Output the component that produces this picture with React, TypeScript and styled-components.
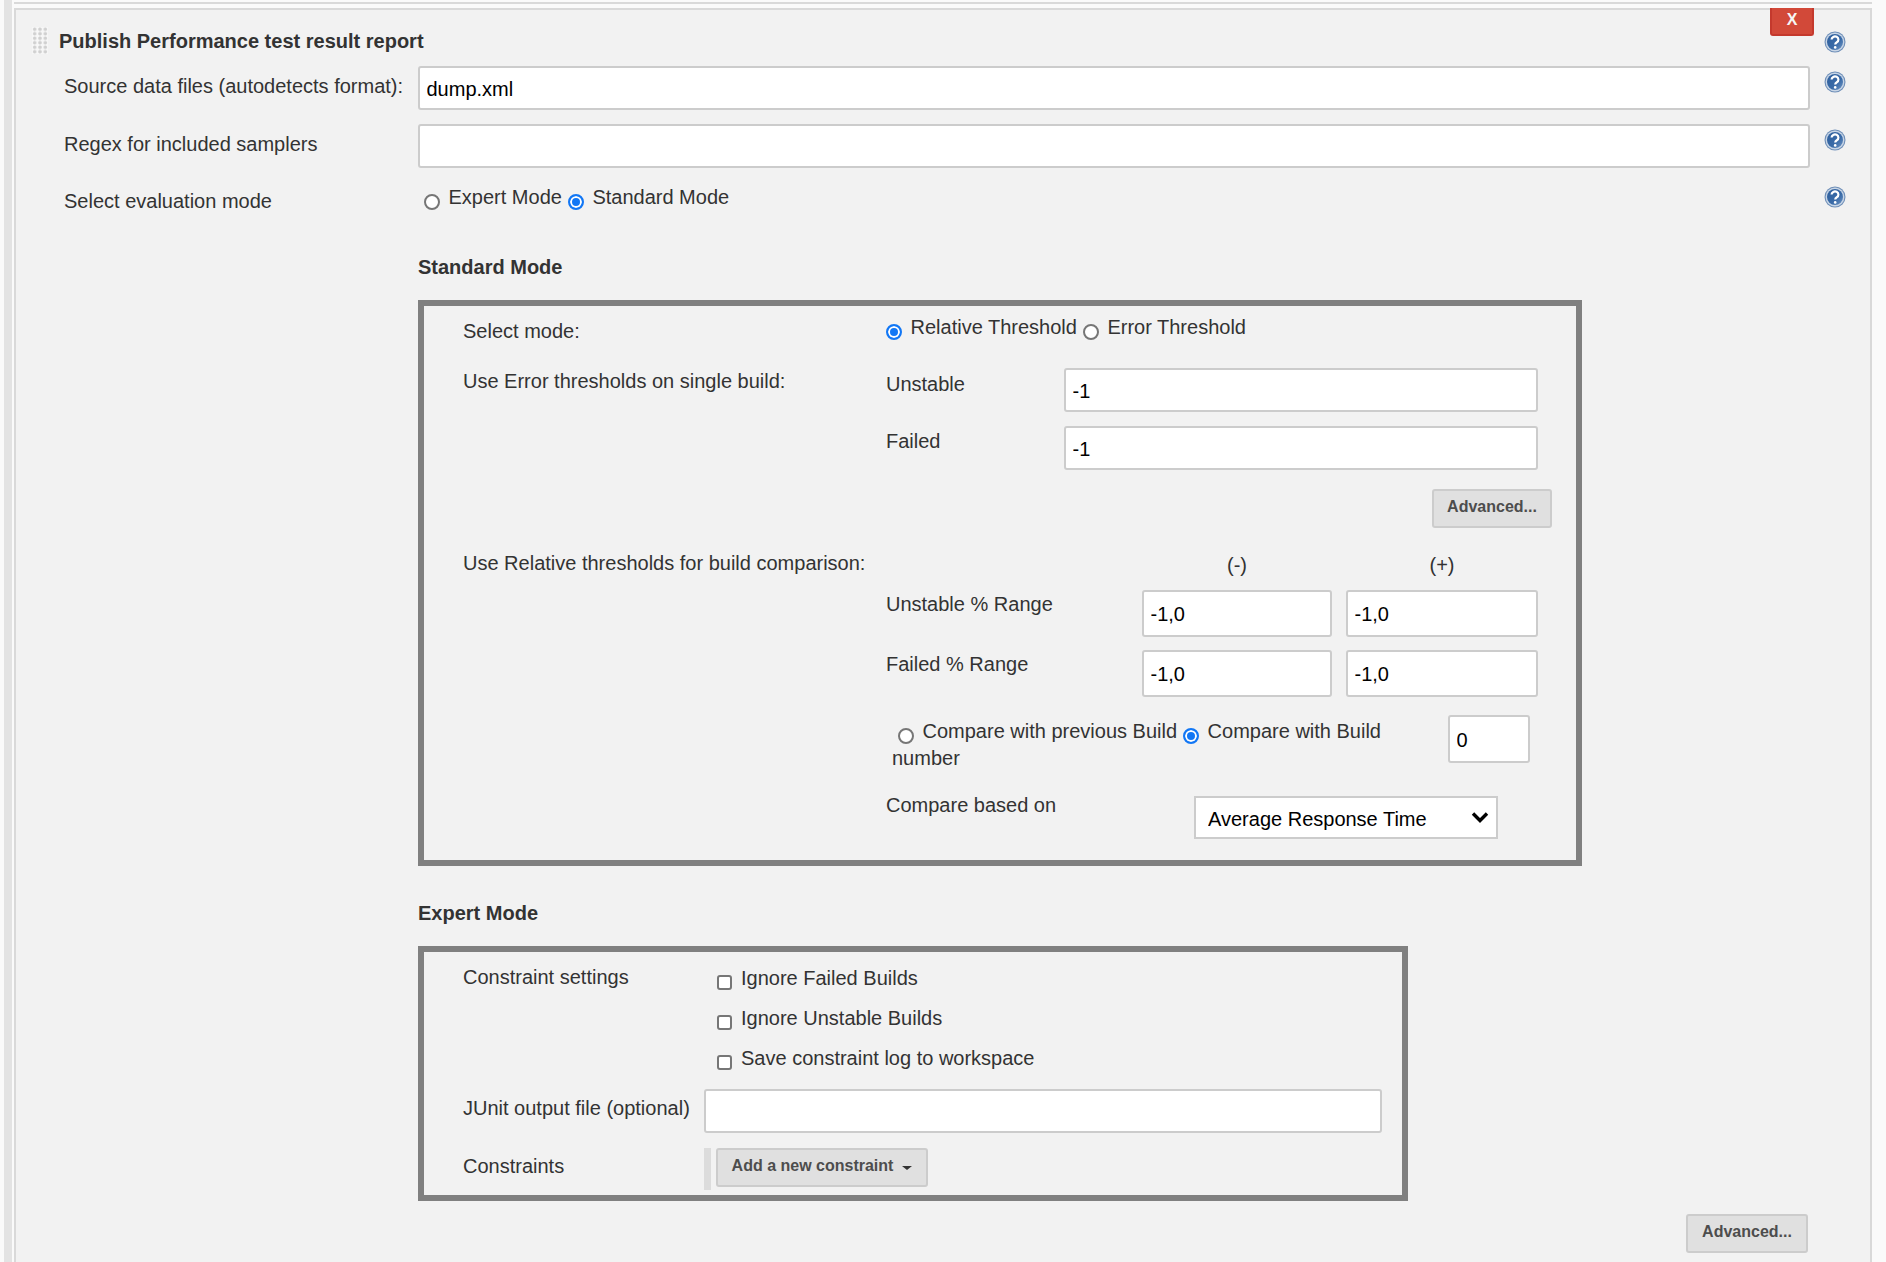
import { createGlobalStyle, styled } from "styled-components";

const GlobalStyle = createGlobalStyle`
    html, body {
        margin: 0;
        height: 100%;
        overflow: hidden;
        background-color: #fafafa;
    }
    body {
        font-family: "Liberation Sans", Arial, sans-serif;
        font-size: 20px;
        line-height: 22px;
        color: #333;
    }
`;

const Page = styled.div`
    display: flex;
    height: 1262px;
    padding-left: 4px;
    box-sizing: border-box;
`;
const Rail = styled.div`
    width: 8px;
    background-color: #e3e3e3;
`;
const Main = styled.div`
    width: 1860px;
    display: flex;
    flex-direction: column;
    padding-top: 2px;
    box-sizing: border-box;
`;
const PrevEdge = styled.div`
    height: 2px;
    margin: 0 0 4px 2px;
    background-color: #d9d9d9;
`;
const Panel = styled.section`
    flex: 1;
    position: relative;
    margin-left: 2px;
    border: 2px solid #d9d9d9;
    border-bottom: 0;
    background-color: #f2f2f2;
`;
const DeleteButton = styled.button`
    position: absolute;
    top: -2px;
    right: 56px;
    width: 44px;
    height: 28px;
    padding: 0 0 2px;
    border: 2px solid #c4392d;
    border-top: 0;
    border-radius: 0 0 3px 3px;
    background-color: #d24939;
    color: #f6f6f6;
    font: bold 16px "Liberation Sans", Arial, sans-serif;
`;
const Header = styled.div`
    display: flex;
    align-items: center;
    height: 27px;
    margin-top: 17px;
    padding-left: 16px;
    gap: 11px;
`;
const Grip = styled.div`
    width: 16px;
    height: 27px;
    background-color: #f8f8f8;
    background-image: radial-gradient(circle, #d0d0d0 38%, #f7f7f7 62%);
    background-size: 5.33px 4.5px;
`;
const Title = styled.h2`
    flex: 1;
    margin: 1px 0 0;
    font-size: 20px;
    font-weight: bold;
    line-height: 22px;
`;
const HelpSlot = styled.div<{ $top?: number }>`
    width: 22px;
    height: 22px;
    margin-left: 14px;
    margin-right: 24px;
    margin-top: ${(p) => p.$top ?? 0}px;
`;
const FormRow = styled.div<{ $top: number }>`
    display: grid;
    grid-template-columns: 402px 1392px 1fr;
    margin-top: ${(p) => p.$top}px;
`;
const RowLabel = styled.label<{ $top?: number }>`
    padding-left: 48px;
    padding-top: ${(p) => p.$top ?? 0}px;
`;
const TextInput = styled.input<{ $height?: number }>`
    display: block;
    width: 100%;
    height: ${(p) => p.$height ?? 44}px;
    box-sizing: border-box;
    padding: 2px 6.5px 0;
    border: 2px solid #ccc;
    border-radius: 3px;
    background-color: #fff;
    color: #000;
    font: 20px "Liberation Sans", Arial, sans-serif;
    outline: none;
`;
const ChoiceLine = styled.div<{ $inset: number; $top: number }>`
    display: flex;
    align-items: center;
    align-self: start;
    margin-top: ${(p) => p.$top}px;
    padding-left: ${(p) => p.$inset}px;
    gap: 6px;
`;
const Choice = styled.label`
    display: flex;
    align-items: center;
    gap: 8.5px;
`;
const Radio = styled.input.attrs({ type: "radio" })`
    appearance: none;
    flex: none;
    width: 16px;
    height: 16px;
    margin: 10px 0 0;
    box-sizing: border-box;
    border: 2px solid #767676;
    border-radius: 50%;
    background-color: #fff;

    &:checked {
        border-color: #1277f5;
        background-color: #1277f5;
        box-shadow: inset 0 0 0 2px #fff;
    }
`;
const InlineRadio = styled(Radio)`
    display: inline-block;
    margin: 0 8.5px 0 6px;
    vertical-align: -6px;
`;
const Heading = styled.h3<{ $top: number }>`
    margin: ${(p) => p.$top}px 0 0 402px;
    font-size: 20px;
    font-weight: bold;
    line-height: 22px;
`;
const ModeBox = styled.div<{ $width: number; $top: number }>`
    width: ${(p) => p.$width}px;
    margin: ${(p) => p.$top}px 0 0 402px;
    border: 6px solid #808080;
    box-sizing: border-box;
    padding-left: 39px;
`;
const Section = styled.div<{ $top: number }>`
    display: grid;
    grid-template-columns: 423px 1fr;
    margin-top: ${(p) => p.$top}px;
`;
const SectionLabel = styled.div<{ $top?: number }>`
    padding-top: ${(p) => p.$top ?? 0}px;
`;
const SectionBody = styled.div`
    display: flex;
    flex-direction: column;
    padding-right: 38px;
`;
const FieldRow = styled.div`
    display: grid;
    grid-template-columns: 178px 1fr;
    margin-bottom: 14px;
`;
const FieldLabel = styled.div<{ $top: number }>`
    padding-top: ${(p) => p.$top}px;
`;
const AdvancedLine = styled.div<{ $inset: number; $top: number }>`
    display: flex;
    justify-content: flex-end;
    margin-top: ${(p) => p.$top}px;
    margin-right: ${(p) => p.$inset}px;
`;
const Button = styled.button<{ $width: number }>`
    display: flex;
    align-items: center;
    justify-content: center;
    gap: 9px;
    width: ${(p) => p.$width}px;
    height: 39px;
    padding: 0 0 3px;
    border: 2px solid #ccc;
    border-radius: 3px;
    background-color: #e0e0e0;
    color: #4d4d4d;
    font: bold 16px "Liberation Sans", Arial, sans-serif;
`;
const Caret = styled.span`
    width: 0;
    height: 0;
    margin-top: 3px;
    border-left: 5px solid transparent;
    border-right: 5px solid transparent;
    border-top: 4px solid #333;
`;
const RangeGrid = styled.div<{ $top: number }>`
    display: grid;
    grid-template-columns: 256px 190px 206px;
    margin-top: ${(p) => p.$top}px;
`;
const RangeCell = styled.div<{ $pad?: boolean }>`
    margin-left: ${(p) => (p.$pad ? 14 : 0)}px;
`;
const RangeHead = styled(RangeCell)`
    text-align: center;
`;
const CompareRow = styled.div`
    display: grid;
    grid-template-columns: 562px 82px;
    align-items: start;
    margin-top: 18px;
`;
const CompareText = styled.div`
    padding-left: 6px;
    padding-top: 3px;
    line-height: 27px;
`;
const BasedRow = styled.div`
    display: grid;
    grid-template-columns: 308px 304px;
    margin-top: 22px;
    margin-bottom: 21px;
`;
const SelectWrap = styled.div`
    position: relative;
    margin-top: 2px;
    height: 43px;
`;
const Select = styled.select`
    appearance: none;
    display: block;
    width: 100%;
    height: 100%;
    padding: 2px 12px 0;
    border: 2px solid #ccc;
    border-radius: 0;
    background-color: #fff;
    color: #000;
    font: 20px "Liberation Sans", Arial, sans-serif;
`;
const SelectArrow = styled.svg`
    position: absolute;
    top: 15px;
    right: 9px;
    width: 18px;
    height: 12px;
`;
const CheckList = styled.div`
    display: flex;
    flex-direction: column;
    gap: 17px;
    padding: 1px 0 0 13px;
`;
const CheckLine = styled.label`
    display: flex;
    gap: 9px;
`;
const Checkbox = styled.input.attrs({ type: "checkbox" })`
    appearance: none;
    flex: none;
    width: 15px;
    height: 15px;
    margin: 8px 0 0;
    box-sizing: border-box;
    border: 2px solid #767676;
    border-radius: 3px;
    background-color: #fff;
`;
const ExpertRow = styled.div<{ $top: number }>`
    display: grid;
    grid-template-columns: 241px 678px;
    margin-top: ${(p) => p.$top}px;
`;
const AddLine = styled.div`
    display: flex;
    gap: 5px;
    height: 42px;
    margin-bottom: 5px;
`;
const RepeatHandle = styled.div`
    width: 7px;
    background-color: #dcdcdc;
`;
const FooterLine = styled.div`
    display: flex;
    justify-content: flex-end;
    margin-top: 13px;
    margin-right: 62px;
`;

function HelpIcon() {
    return (
        <svg width="22" height="22" viewBox="0 0 22 22" aria-hidden="true">
            <defs>
                <linearGradient id="helpFill" x1="0" y1="0" x2="1" y2="1">
                    <stop offset="0" stopColor="#2f5f9c" />
                    <stop offset="0.6" stopColor="#3a6ba8" />
                    <stop offset="1" stopColor="#6f95c4" />
                </linearGradient>
            </defs>
            <circle cx="11" cy="11" r="10.5" fill="#6f8fb8" />
            <circle cx="11" cy="11" r="9.4" fill="#c9d6e6" />
            <circle cx="11" cy="11" r="8" fill="url(#helpFill)" />
            <path d="M7.6 8.6a3.4 3.1 0 1 1 5.2 2.6c-1.1.7-1.6 1.2-1.6 2.4" fill="none" stroke="#fff" strokeWidth="2.2" />
            <circle cx="11.2" cy="16.4" r="1.3" fill="#fff" />
        </svg>
    );
}

function Help({ top }: { top?: number }) {
    return (
        <HelpSlot $top={top}>
            <HelpIcon />
        </HelpSlot>
    );
}

export default function App() {
    return (
        <>
            <GlobalStyle />
            <Page>
                <Rail />
                <Main>
                    <PrevEdge />
                    <Panel>
                        <DeleteButton>X</DeleteButton>
                        <Header>
                            <Grip />
                            <Title>Publish Performance test result report</Title>
                            <Help top={3} />
                        </Header>
                        <FormRow $top={12}>
                            <RowLabel $top={9}>Source data files (autodetects format):</RowLabel>
                            <TextInput defaultValue="dump.xml" />
                            <Help top={5} />
                        </FormRow>
                        <FormRow $top={14}>
                            <RowLabel $top={9}>Regex for included samplers</RowLabel>
                            <TextInput />
                            <Help top={5} />
                        </FormRow>
                        <FormRow $top={18}>
                            <RowLabel $top={4}>Select evaluation mode</RowLabel>
                            <ChoiceLine $inset={6} $top={-2}>
                                <Choice><Radio name="evaluation" />Expert Mode</Choice>
                                <Choice><Radio name="evaluation" defaultChecked />Standard Mode</Choice>
                            </ChoiceLine>
                            <Help />
                        </FormRow>
                        <Heading $top={44}>Standard Mode</Heading>
                        <ModeBox $width={1164} $top={22}>
                            <Section $top={10}>
                                <SectionLabel $top={4}>Select mode:</SectionLabel>
                                <ChoiceLine $inset={0} $top={-2}>
                                    <Choice><Radio name="mode" defaultChecked />Relative Threshold</Choice>
                                    <Choice><Radio name="mode" />Error Threshold</Choice>
                                </ChoiceLine>
                            </Section>
                            <Section $top={26}>
                                <SectionLabel $top={2}>Use Error thresholds on single build:</SectionLabel>
                                <SectionBody>
                                    <FieldRow>
                                        <FieldLabel $top={5}>Unstable</FieldLabel>
                                        <TextInput defaultValue="-1" />
                                    </FieldRow>
                                    <FieldRow>
                                        <FieldLabel $top={4}>Failed</FieldLabel>
                                        <TextInput defaultValue="-1" />
                                    </FieldRow>
                                    <AdvancedLine $top={5} $inset={-14}>
                                        <Button $width={120}>Advanced...</Button>
                                    </AdvancedLine>
                                </SectionBody>
                            </Section>
                            <Section $top={24}>
                                <SectionLabel>Use Relative thresholds for build comparison:</SectionLabel>
                                <SectionBody>
                                    <RangeGrid $top={2}>
                                        <span />
                                        <RangeHead>(-)</RangeHead>
                                        <RangeHead $pad>(+)</RangeHead>
                                    </RangeGrid>
                                    <RangeGrid $top={14}>
                                        <FieldLabel $top={3}>Unstable % Range</FieldLabel>
                                        <TextInput $height={47} defaultValue="-1,0" />
                                        <RangeCell $pad><TextInput $height={47} defaultValue="-1,0" /></RangeCell>
                                    </RangeGrid>
                                    <RangeGrid $top={13}>
                                        <FieldLabel $top={3}>Failed % Range</FieldLabel>
                                        <TextInput $height={47} defaultValue="-1,0" />
                                        <RangeCell $pad><TextInput $height={47} defaultValue="-1,0" /></RangeCell>
                                    </RangeGrid>
                                    <CompareRow>
                                        <CompareText>
                                            <InlineRadio name="compare" />Compare with previous Build
                                            <InlineRadio name="compare" defaultChecked />Compare with Build<br />number
                                        </CompareText>
                                        <TextInput $height={48} defaultValue="0" />
                                    </CompareRow>
                                    <BasedRow>
                                        <div>Compare based on</div>
                                        <SelectWrap>
                                            <Select defaultValue="avg">
                                                <option value="avg">Average Response Time</option>
                                            </Select>
                                            <SelectArrow viewBox="0 0 18 12" aria-hidden="true">
                                                <path d="M2 2.5 9 9.5 16 2.5" fill="none" stroke="#000" strokeWidth="3.4" />
                                            </SelectArrow>
                                        </SelectWrap>
                                    </BasedRow>
                                </SectionBody>
                            </Section>
                        </ModeBox>
                        <Heading $top={36}>Expert Mode</Heading>
                        <ModeBox $width={990} $top={22}>
                            <ExpertRow $top={14}>
                                <div>Constraint settings</div>
                                <CheckList>
                                    <CheckLine><Checkbox />Ignore Failed Builds</CheckLine>
                                    <CheckLine><Checkbox />Ignore Unstable Builds</CheckLine>
                                    <CheckLine><Checkbox />Save constraint log to workspace</CheckLine>
                                </CheckList>
                            </ExpertRow>
                            <ExpertRow $top={19}>
                                <SectionLabel $top={8}>JUnit output file (optional)</SectionLabel>
                                <TextInput />
                            </ExpertRow>
                            <ExpertRow $top={15}>
                                <SectionLabel $top={7}>Constraints</SectionLabel>
                                <AddLine>
                                    <RepeatHandle />
                                    <Button $width={212}>Add a new constraint<Caret /></Button>
                                </AddLine>
                            </ExpertRow>
                        </ModeBox>
                        <FooterLine>
                            <Button $width={122}>Advanced...</Button>
                        </FooterLine>
                    </Panel>
                </Main>
            </Page>
        </>
    );
}
